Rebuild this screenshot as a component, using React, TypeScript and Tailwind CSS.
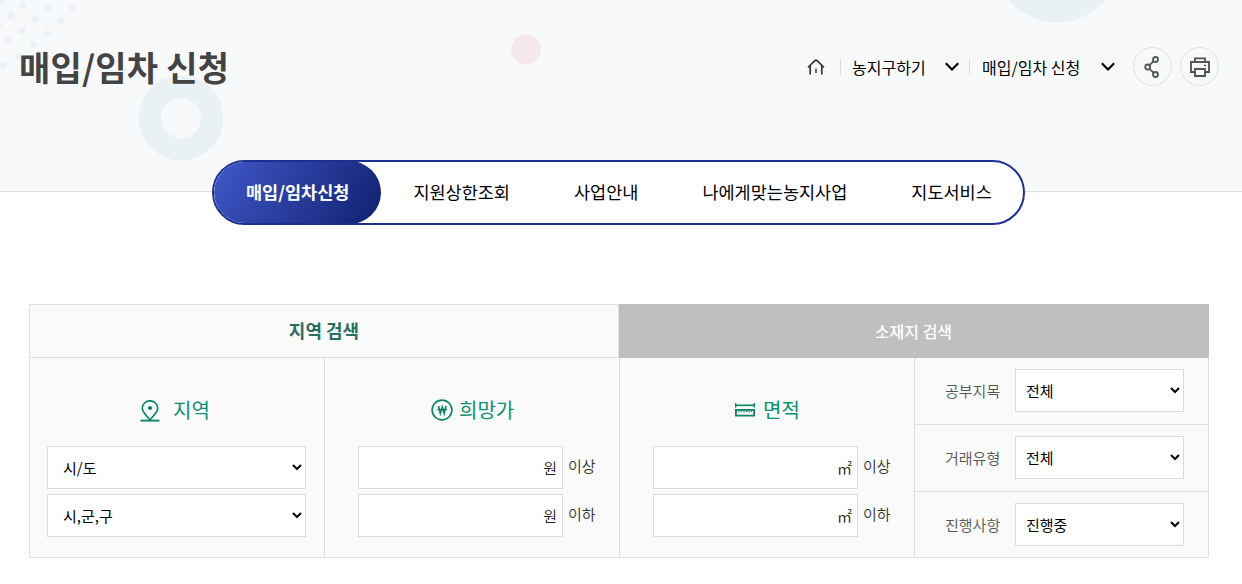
import { ReactNode, useState } from "react";
import clsx from "clsx";

const TABS = ["매입/임차신청", "지원상한조회", "사업안내", "나에게맞는농지사업", "지도서비스"];

const DOTS = [
  [1, 1], [23, 5.5], [47.5, 8], [73, 8], [11, 15.5], [35.5, 19.5], [60.5, 21],
  [-2, 25], [22.5, 30.5], [47.5, 33.5], [8, 40.5], [33.5, 45], [18, 56], [3, 65],
];

const FILTERS = [
  { label: "공부지목", options: ["전체", "전", "답", "과수원"] },
  { label: "거래유형", options: ["전체", "매입", "임차"] },
  { label: "진행사항", options: ["진행중", "완료"] },
];

function HomeIcon() {
  return (
    <svg width="18" height="18" viewBox="0 0 18 18" fill="none" stroke="#333" strokeWidth="1.7">
      <path d="M1 9.500 7.800 2.700Q9 1.700 10.200 2.700L17 9.500" />
      <path d="M3.200 7.800v8.200M14.800 7.800v8.200" />
      <path d="M9 10.500v4.500" stroke="#555" />
      <path d="M2.300 16h1.700M14 16h1.700" strokeWidth="1" />
    </svg>
  );
}

function Chevron() {
  return (
    <svg width="14" height="9" viewBox="0 0 14 9" fill="none" stroke="#000" strokeWidth="2.1">
      <path d="M.8 1.200 7 7.400 13.200 1.200" />
    </svg>
  );
}

function ShareIcon() {
  return (
    <svg className="mr-0.5" width="15" height="22" viewBox="0 0 15 22" fill="none" stroke="#555" strokeWidth="1.8">
      <circle cx="11.500" cy="3.500" r="2.500" />
      <circle cx="3.700" cy="11" r="2.500" />
      <circle cx="11.500" cy="18.500" r="2.500" />
      <path d="M9.700 5.200 5.500 9.200M5.500 12.800l4.200 4" />
    </svg>
  );
}

function PrintIcon() {
  return (
    <svg width="20" height="20" viewBox="0 0 20 20" fill="none" stroke="#555" strokeWidth="1.9">
      <path d="M5 4.500V1.400h10v3.100M5 15H1V5h18v10h-4" />
      <path d="M5 12h10v7H5z" />
      <path d="M14 8.500h2" strokeWidth="1.5" />
    </svg>
  );
}

function PinIcon() {
  return (
    <svg className="mt-0.5" width="20" height="22" viewBox="0 0 20 22" fill="none" stroke="#0b8466" strokeWidth="1.7">
      <path d="M10 20C7 15.800 2.300 12.500 2.300 8.300a7.700 7.500 0 0 1 15.400 0C17.700 12.500 13 15.800 10 20Z" />
      <circle cx="10" cy="8" r="2.100" fill="#0b8466" stroke="none" />
      <path d="M.5 20.600h19" strokeWidth="1.900" />
    </svg>
  );
}

function WonIcon() {
  return (
    <svg width="22" height="22" viewBox="0 0 22 22" fill="none" stroke="#0b8466" strokeWidth="1.6">
      <circle cx="11" cy="11" r="9.900" />
      <path d="m7.500 7 1.800 7.500L11.200 8l1.900 6.500L15 7" strokeWidth="1.600" />
      <path d="M6.300 10.500h9.800" strokeWidth="1.300" />
    </svg>
  );
}

function RulerIcon() {
  return (
    <svg width="20" height="14" viewBox="0 0 20 14" fill="none" stroke="#0b8466">
      <path d="M.7 0v4.500M19.300 0v4.500" strokeWidth="1.400" />
      <path d="M.5 2.300h19" strokeWidth="1.600" />
      <path d="M.9 6.900h18.200v5.700H.9z" strokeWidth="1.800" />
      <path d="M4 7v2.500M6.500 7v2M9 7v2.500M11.500 7v2M14 7v2.500M16.500 7v2" strokeWidth="1.100" />
    </svg>
  );
}

function Select({ options, className }: { options: string[]; className: string }) {
  return (
    <select className={clsx("h-[43px] shrink-0 border border-[#dbdbdb] bg-white text-[15px] text-black outline-none", className)}>
      {options.map((o) => (
        <option key={o}>{o}</option>
      ))}
    </select>
  );
}

function Heading({ icon, className, children }: { icon: ReactNode; className?: string; children: ReactNode }) {
  return (
    <h3 className={clsx("mt-9 flex h-8 items-center text-[20px] text-[#0b9072]", className)}>
      {icon}
      {children}
    </h3>
  );
}

function RangeInputs({ unit }: { unit: string }) {
  return (
    <div className="mt-5 flex flex-col gap-[5px] pl-[33px]">
      {["이상", "이하"].map((suffix) => (
        <div key={suffix} className="flex h-[43px] items-center">
          <label className="flex h-[43px] w-[205px] items-center border border-[#dbdbdb] bg-white pr-[5px]">
            <input className="h-full w-0 flex-1 px-3 text-right text-[15px] outline-none" />
            <span className="pt-px text-[15px] font-[350] text-[#222]">{unit}</span>
          </label>
          <span className="mb-0.5 ml-[5px] text-[15px] font-[350] text-[#333]">{suffix}</span>
        </div>
      ))}
    </div>
  );
}

export default function App() {
  const [tab, setTab] = useState(0);

  return (
    <div className="h-[584px] w-[1242px] overflow-hidden bg-white font-['Noto_Sans_CJK_KR',sans-serif] text-black">
      <header className="relative h-48 border-b border-[#dfe1e4] bg-[#f8f9fb]">
        {/* Decorative shapes */}
        <svg className="absolute inset-0" width="1242" height="191" viewBox="0 0 1242 191">
          {DOTS.map(([x, y]) => (
            <circle key={`${x}-${y}`} cx={x} cy={y} r="3.8" fill="#ebf2f6" />
          ))}
          <circle cx="181" cy="118" r="31.200" fill="none" stroke="#e9f1f5" strokeWidth="22.200" />
          <circle cx="526" cy="49.500" r="15" fill="#f5e7ee" />
          <circle cx="1057" cy="-40" r="62.500" fill="#e9f1f5" />
        </svg>

        <div className="relative flex h-[133px] items-center pr-[23px] pl-[19px]">
          <h1 className="text-[34px] font-bold tracking-[0.2px] text-[#444]">매입/임차 신청</h1>
          <nav className="ml-auto flex items-center text-[16px]">
            <HomeIcon />
            <span className="ml-[15px] h-4 w-px bg-[#d9dcdf]" />
            <span className="ml-[11px] w-[93px] pt-px">농지구하기</span>
            <Chevron />
            <span className="ml-[10px] h-4 w-px bg-[#d9dcdf]" />
            <span className="ml-3 w-[119px] pt-px">매입/임차 신청</span>
            <Chevron />
            <button className="ml-[18px] flex size-[39px] items-center justify-center rounded-full border border-[#dbe3e5]">
              <ShareIcon />
            </button>
            <button className="ml-2 flex size-[39px] items-center justify-center rounded-full border border-[#dbe3e5]">
              <PrintIcon />
            </button>
          </nav>
        </div>
      </header>

      {/* Pill tabs straddle the header's bottom edge */}
      <ul className="relative -mt-8 ml-[212px] flex h-[65px] w-[813px] overflow-hidden rounded-full border-2 border-[#1b2f8f] bg-white text-[17.5px]">
        {TABS.map((t, i) => (
          <li key={t} className="-my-px">
            <button
              onClick={() => setTab(i)}
              className={clsx(
                "h-full px-8 whitespace-nowrap",
                i === tab && "rounded-full bg-linear-[120deg] from-[#4058c8] to-[#102070] font-bold text-white",
              )}
            >
              {t}
            </button>
          </li>
        ))}
      </ul>

      <section className="mt-[79px] ml-[29px] w-[1180px] bg-[#fafafa]">
        <div className="flex h-[54px]">
          <button className="w-[590px] border border-[#dfdfdf] pb-0.5 text-[18px] font-bold text-[#2b6e60]">지역 검색</button>
          <button className="w-[590px] bg-[#bfbfbf] pr-px text-[16px] font-medium text-white">소재지 검색</button>
        </div>
        <div className="grid h-[200px] grid-cols-[295px_295px_295px_294px] border-r border-b border-[#dfdfdf]">
          <div className="border-l border-[#dfdfdf] pl-[17px]">
            <Heading icon={<PinIcon />} className="gap-[13px] pl-[93px]">지역</Heading>
            <div className="mt-5 flex flex-col gap-[5px]">
              <Select options={["시/도"]} className="w-[259px] pl-[11px]" />
              <Select options={["시,군,구"]} className="w-[259px] pl-[11px]" />
            </div>
          </div>
          <div className="border-l border-[#dfdfdf]">
            <Heading icon={<WonIcon />} className="gap-1.5 pl-[106px]">희망가</Heading>
            <RangeInputs unit="원" />
          </div>
          <div className="border-l border-[#dfdfdf]">
            <Heading icon={<RulerIcon />} className="gap-2 pl-[115px]">면적</Heading>
            <RangeInputs unit="㎡" />
          </div>
          <div className="flex flex-col divide-y divide-[#dfdfdf] border-l border-[#dfdfdf]">
            {FILTERS.map((f) => (
              <div key={f.label} className="flex h-[67px] items-start pt-[11px] pl-[30px] last:h-[66px]">
                <span className="w-[70px] text-[15px] leading-[43px] font-[350] text-[#555]">{f.label}</span>
                <Select options={f.options} className="w-[169px] pl-1.5" />
              </div>
            ))}
          </div>
        </div>
      </section>
    </div>
  );
}
